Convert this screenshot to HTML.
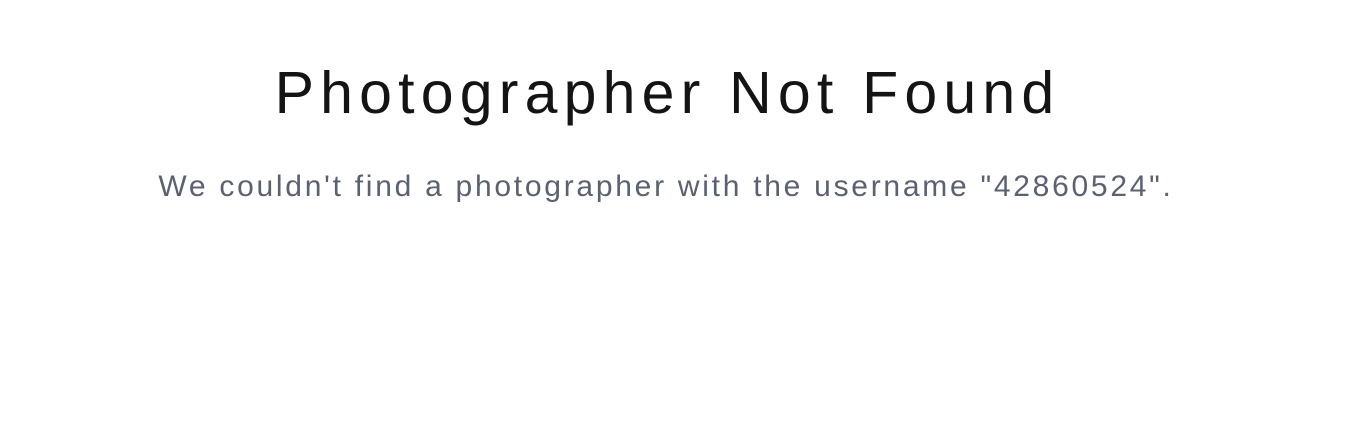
<!DOCTYPE html>
<html><head><meta charset="utf-8"><style>
html,body{margin:0;padding:0;background:#fff;width:1370px;height:440px;overflow:hidden}
body{font-family:"Liberation Sans",sans-serif;text-align:center}
h1{position:absolute;left:0;width:1335px;top:58px;margin:0;font-weight:normal;font-size:59px;line-height:70px;color:#141414;letter-spacing:6.2px}
p{position:absolute;left:0;width:1332px;top:168px;margin:0;font-size:30px;line-height:38px;color:#5b6170;letter-spacing:2.73px}
</style></head><body>
<h1>Photographer Not Found</h1>
<p>We couldn't find a photographer with the username "42860524".</p>
</body></html>
